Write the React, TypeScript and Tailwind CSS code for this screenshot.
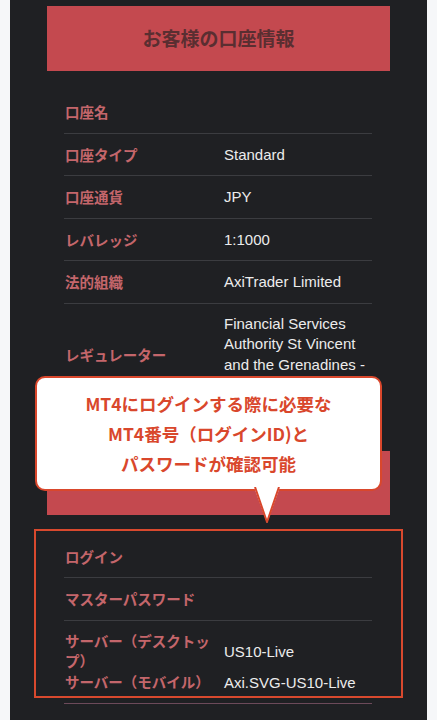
const ACCOUNT_ROWS: { label: string; value: string }[] = [
  { label: '口座名', value: '' },
  { label: '口座タイプ', value: 'Standard' },
  { label: '口座通貨', value: 'JPY' },
  { label: 'レバレッジ', value: '1:1000' },
  { label: '法的組織', value: 'AxiTrader Limited' },
];

const labelFont = { fontFamily: '"Noto Sans CJK JP", "Noto Sans", sans-serif' };
const valueFont = { fontFamily: '"Liberation Sans", Arial, sans-serif' };

function Row({ label, value }: { label: string; value: string }) {
  return (
    <div className="flex h-[41.5px] items-center border-b border-[#3b3c40] box-content">
      <div className="w-[160px] shrink-0 pl-[1px] text-[14.5px] font-bold leading-[21px] text-[#c4666b]" style={labelFont}>
        {label}
      </div>
      <div className="text-[15px] leading-[21px] text-[#ececec]" style={valueFont}>
        {value}
      </div>
    </div>
  );
}

export default function App() {
  return (
    <div className="min-h-screen bg-[#f6f7f9] px-[10px]">
      <div className="relative min-h-screen bg-[#1f2023] pt-[6px] pb-[16px]">
        {/* Header */}
        <div className="mx-[37px] flex h-[65px] items-center justify-center bg-[#c4494f]">
          <h1 className="text-[19px] font-bold text-[#5a2e31]" style={labelFont}>
            お客様の口座情報
          </h1>
        </div>

        {/* Account rows */}
        <div className="mt-[20px] pl-[54px] pr-[55px]">
          {ACCOUNT_ROWS.map(r => (
            <Row key={r.label} label={r.label} value={r.value} />
          ))}
          <div className="flex items-center border-b border-[#3b3c40] pt-[10px] pb-[10px]">
            <div className="w-[160px] shrink-0 pl-[1px] text-[14.5px] font-bold leading-[21px] text-[#c4666b]" style={labelFont}>
              レギュレーター
            </div>
            <div className="text-[15px] leading-[20.5px] text-[#ececec]" style={valueFont}>
              Financial Services Authority St Vincent and the Grenadines - 25417 BC 2019
            </div>
          </div>
        </div>

        {/* Second section header (covered by the callout) */}
        <div className="mx-[37px] mt-[44px] h-[64px] bg-[#c4494f]" />

        {/* Highlighted login box */}
        <div className="mx-[24px] mt-[14px] border-2 border-[#d8492e] pt-[5px] pb-[3px] pl-[28px] pr-[29px]">
          <Row label="ログイン" value="" />
          <Row label="マスターパスワード" value="" />
          <div className="flex items-center pt-[10px]">
            <div className="w-[160px] shrink-0 pl-[1px] pr-[10px] text-[14.5px] font-bold leading-[20.5px] text-[#c4666b]" style={labelFont}>
              サーバー（デスクトップ）
            </div>
            <div className="text-[15px] leading-[21px] text-[#ececec]" style={valueFont}>
              US10-Live
            </div>
          </div>
          <div className="flex items-center">
            <div className="w-[160px] shrink-0 pl-[1px] text-[14.5px] font-bold leading-[20.5px] text-[#c4666b]" style={labelFont}>
              サーバー（モバイル）
            </div>
            <div className="text-[15px] leading-[21px] text-[#ececec]" style={valueFont}>
              Axi.SVG-US10-Live
            </div>
          </div>
        </div>
        <div className="mt-[5px] ml-[54px] mr-[55px] h-[1.5px] bg-[#6c4a5a]" />

        {/* Callout */}
        <div className="absolute left-[25px] top-[376px] w-[347px] h-[115px] rounded-[10px] border-2 border-[#d9472c] bg-white flex flex-col items-center justify-center">
          <p
            className="text-center text-[17.5px] font-bold leading-[30px] text-[#d9472c]"
            style={{ fontFamily: '"Noto Sans CJK JP", "Liberation Sans", sans-serif' }}
          >
            MT4にログインする際に必要な
            <br />
            MT4番号（ログインID)と
            <br />
            パスワードが確認可能
          </p>
          <svg className="absolute left-[217px] top-full -mt-[2px]" width="26" height="38" viewBox="0 0 26 38">
            <path d="M0 0 L13 36 L26 0 Z" fill="#ffffff" />
            <path d="M1 0 L13 35 L25 0" fill="none" stroke="#d9472c" strokeWidth="2" strokeLinejoin="round" />
          </svg>
        </div>
      </div>
    </div>
  );
}
